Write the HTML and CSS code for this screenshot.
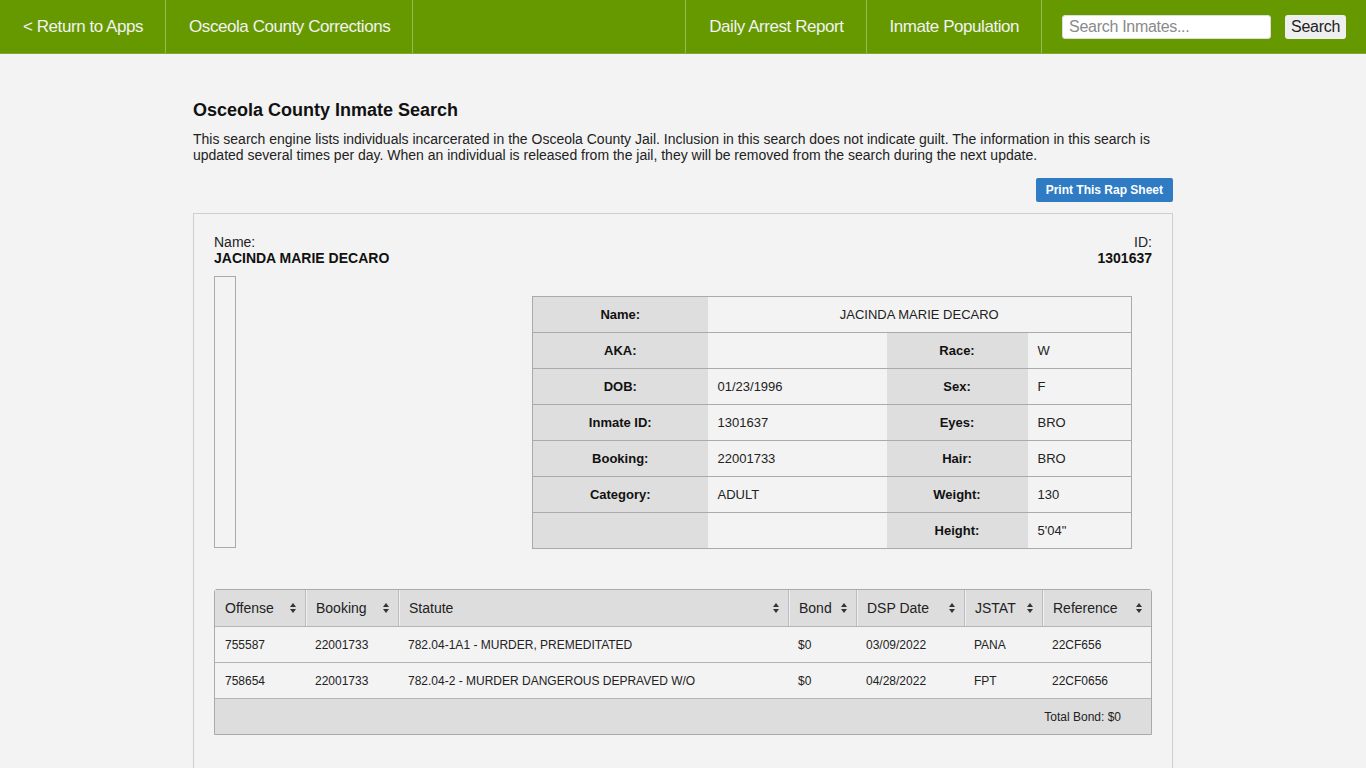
FILE: index.html
```html
<!DOCTYPE html>
<html lang="en">
<head>
<meta charset="utf-8">
<title>Osceola County Inmate Search</title>
<link rel="stylesheet" href="styles.css">
</head>
<body>
<nav class="topbar">
  <div class="nav-left">
    <a class="nav-link" href="#">&lt; Return to Apps</a>
    <a class="nav-link" href="#">Osceola County Corrections</a>
  </div>
  <div class="nav-right">
    <a class="nav-link" href="#">Daily Arrest Report</a>
    <a class="nav-link" href="#">Inmate Population</a>
    <form class="nav-search">
      <input class="search-input" type="text" placeholder="Search Inmates...">
      <button class="search-btn" type="button">Search</button>
    </form>
  </div>
</nav>

<main class="container">
  <h1 class="page-title">Osceola County Inmate Search</h1>
  <p class="intro">This search engine lists individuals incarcerated in the Osceola County Jail. Inclusion in this search does not indicate guilt. The information in this search is updated several times per day. When an individual is released from the jail, they will be removed from the search during the next update.</p>
  <div class="actions">
    <button class="print-btn" type="button">Print This Rap Sheet</button>
  </div>

  <section class="panel">
    <div class="panel-head">
      <div class="field">
        <div class="field-label">Name:</div>
        <div class="field-value">JACINDA MARIE DECARO</div>
      </div>
      <div class="field field-right">
        <div class="field-label">ID:</div>
        <div class="field-value">1301637</div>
      </div>
    </div>

    <div class="profile">
      <div class="photo"></div>
      <table class="info">
        <tr><th>Name:</th><td colspan="3" class="center">JACINDA MARIE DECARO</td></tr>
        <tr><th>AKA:</th><td></td><th>Race:</th><td>W</td></tr>
        <tr><th>DOB:</th><td>01/23/1996</td><th>Sex:</th><td>F</td></tr>
        <tr><th>Inmate ID:</th><td>1301637</td><th>Eyes:</th><td>BRO</td></tr>
        <tr><th>Booking:</th><td>22001733</td><th>Hair:</th><td>BRO</td></tr>
        <tr><th>Category:</th><td>ADULT</td><th>Weight:</th><td>130</td></tr>
        <tr><th></th><td></td><th>Height:</th><td>5'04"</td></tr>
      </table>
    </div>

    <table class="charges">
      <thead>
        <tr>
          <th class="c-off"><span>Offense</span><i class="sort"></i></th>
          <th class="c-book"><span>Booking</span><i class="sort"></i></th>
          <th class="c-stat"><span>Statute</span><i class="sort"></i></th>
          <th class="c-bond"><span>Bond</span><i class="sort"></i></th>
          <th class="c-dsp"><span>DSP Date</span><i class="sort"></i></th>
          <th class="c-jstat"><span>JSTAT</span><i class="sort"></i></th>
          <th class="c-ref"><span>Reference</span><i class="sort"></i></th>
        </tr>
      </thead>
      <tbody>
        <tr>
          <td>755587</td><td>22001733</td><td>782.04-1A1 - MURDER, PREMEDITATED</td>
          <td>$0</td><td>03/09/2022</td><td>PANA</td><td>22CF656</td>
        </tr>
        <tr>
          <td>758654</td><td>22001733</td><td>782.04-2 - MURDER DANGEROUS DEPRAVED W/O</td>
          <td>$0</td><td>04/28/2022</td><td>FPT</td><td>22CF0656</td>
        </tr>
      </tbody>
      <tfoot>
        <tr><td colspan="7">Total Bond: $0</td></tr>
      </tfoot>
    </table>
  </section>
</main>
</body>
</html>
```

FILE: styles.css
```css
* { box-sizing: border-box; }

html, body {
  margin: 0;
  padding: 0;
  background: #f3f3f3;
  font-family: Arial, "Liberation Sans", Helvetica, sans-serif;
  color: #222;
}

/* top navigation bar */
.topbar {
  display: flex;
  justify-content: space-between;
  height: 54px;
  background: #669900;
  border-bottom: 1px solid #7ea83a;
}

.nav-left, .nav-right {
  display: flex;
  align-items: stretch;
}

.nav-link {
  display: flex;
  align-items: center;
  padding: 0 22px 0 23px;
  color: #f2f2f2;
  text-decoration: none;
  font-size: 17px;
  letter-spacing: -0.44px;
}

.nav-left .nav-link { border-right: 1px solid #94bb55; }
.nav-right .nav-link { border-left: 1px solid #94bb55; }

.nav-search {
  display: flex;
  align-items: center;
  gap: 14px;
  padding: 0 20px 0 20px;
  border-left: 1px solid #94bb55;
}

.search-input {
  width: 209px;
  height: 24px;
  border: 1px solid #ddd;
  border-radius: 3px;
  padding: 0 6px;
  font-family: inherit;
  font-size: 16px;
  letter-spacing: -0.3px;
  color: #333;
  background: #fff;
}
.search-input::placeholder { color: #8a8a8a; }

.search-btn {
  height: 24px;
  padding: 0 6px;
  border: none;
  border-radius: 3px;
  background: #efefef;
  font-family: inherit;
  font-size: 16px;
  letter-spacing: -0.3px;
  color: #222;
}

/* page body */
.container {
  width: 980px;
  margin: 0 auto;
  padding-top: 46px;
}

.page-title {
  margin: 0;
  font-size: 18px;
  line-height: 21px;
  font-weight: bold;
  color: #111;
}

.intro {
  margin: 10px 0 0;
  font-size: 14px;
  line-height: 16px;
  color: #222;
}

.actions {
  display: flex;
  justify-content: flex-end;
  margin-top: 15px;
}

.print-btn {
  height: 24px;
  padding: 0 10px;
  border: none;
  border-radius: 2px;
  background: #2f7bc4;
  color: #fff;
  font-family: inherit;
  font-size: 12px;
  font-weight: bold;
}

.panel {
  margin-top: 11px;
  border: 1px solid #cfcfcf;
  border-bottom: none;
  padding: 20px 20px 60px;
  min-height: 560px;
}

.panel-head {
  display: flex;
  justify-content: space-between;
  font-size: 14px;
  line-height: 16px;
}

.field-value { font-weight: bold; color: #111; }
.field-right { text-align: right; }

.profile {
  display: flex;
  align-items: flex-start;
  margin-top: 10px;
}

.photo {
  width: 22px;
  height: 272px;
  border: 1px solid #aaa;
}

/* personal details grid */
.info {
  margin: 20px 20px 0 auto;
  width: 600px;
  border-collapse: collapse;
  font-size: 13px;
  border: 1px solid #aaa;
}

.info th, .info td {
  height: 36px;
  border-top: 1px solid #aaa;
  padding: 0 10px;
}

.info th {
  background: #dedede;
  font-weight: bold;
  text-align: center;
  color: #111;
}
.info tr > th:first-child { width: 175px; }
.info tr > td:nth-child(2) { width: 179px; }
.info tr > th:nth-child(3) { width: 141px; }

.info td { text-align: left; color: #222; }
.info td.center { text-align: center; }

/* charges table */
.charges {
  margin-top: 40px;
  width: 938px;
  border-collapse: separate;
  border-spacing: 0;
  border: 1px solid #aaa;
  border-radius: 3px 3px 0 0;
  font-size: 12px;
}

.charges th {
  height: 36px;
  background: #dddddd;
  font-weight: normal;
  font-size: 14px;
  text-align: left;
  padding: 0 8px 0 10px;
  border-left: 1px solid #bdbdbd;
  box-shadow: inset 1px 0 0 #efefef;
  color: #222;
  white-space: nowrap;
}
.charges th:first-child { border-left: none; box-shadow: none; }

.charges th span { vertical-align: middle; }

.sort {
  float: right;
  position: relative;
  top: 4px;
  width: 7px;
  height: 10px;
}
.sort::before, .sort::after {
  content: "";
  position: absolute;
  left: 0;
  border-left: 3.5px solid transparent;
  border-right: 3.5px solid transparent;
}
.sort::before { top: 0; border-bottom: 4px solid #333; }
.sort::after { bottom: 0; border-top: 4px solid #333; }

.c-off { width: 90px; }
.c-book { width: 93px; }
.c-stat { width: 390px; }
.c-bond { width: 68px; }
.c-dsp { width: 108px; }
.c-jstat { width: 78px; }

.charges td {
  height: 36px;
  padding: 0 10px;
  border-top: 1px solid #b5b5b5;
  color: #222;
  white-space: nowrap;
}

.charges tfoot td {
  background: #dddddd;
  text-align: right;
  padding-right: 30px;
}
```
